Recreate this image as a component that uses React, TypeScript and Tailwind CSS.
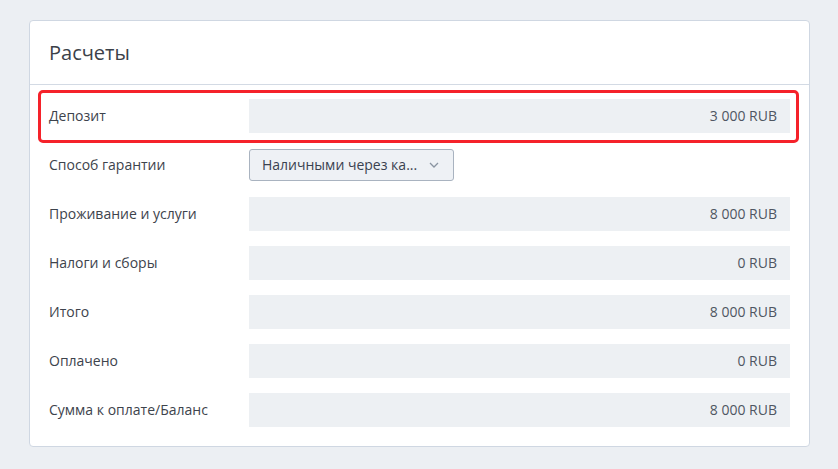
import React from "react";

const rows: { label: string; value?: string; select?: string }[] = [
  { label: "Депозит", value: "3 000 RUB" },
  { label: "Способ гарантии", select: "Наличными через ка..." },
  { label: "Проживание и услуги", value: "8 000 RUB" },
  { label: "Налоги и сборы", value: "0 RUB" },
  { label: "Итого", value: "8 000 RUB" },
  { label: "Оплачено", value: "0 RUB" },
  { label: "Сумма к оплате/Баланс", value: "8 000 RUB" },
];

export default function App() {
  return (
    <div
      className="w-[838px] h-[469px] bg-[#eceff3] pt-[20px] pl-[29px]"
      style={{ fontFamily: '"Open Sans", "Noto Sans", sans-serif' }}
    >
      <div className="w-[781px] h-[427px] bg-white border border-[#cfd7e2] rounded-[4px]">
        <div className="h-[64px] border-b border-[#d3dae4] flex items-center pl-[19px]">
          <span className="text-[20px] text-[#3b4149] leading-[28px] mt-[1px]">Расчеты</span>
        </div>
        <div className="px-[19px] pt-[14px] flex flex-col gap-[15px]">
          {rows.map((r, i) => (
            <div key={i} className="relative flex items-center h-[34px]">
              {i === 0 && (
                <div className="absolute left-[-11px] right-[-9px] top-[-9px] bottom-[-10px] border-[3px] border-[#f5222a] rounded-[5px] pointer-events-none" />
              )}
              <div className="w-[200px] text-[14px] text-[#3d434c] pb-[2px]">{r.label}</div>
              {r.value !== undefined ? (
                <div className="flex-1 h-[34px] bg-[#edf0f3] flex items-center justify-end pr-[13px] pb-[2px] text-[14px] text-[#4f5662]">
                  {r.value}
                </div>
              ) : (
                <div className="w-[205px] h-[32px] bg-[#eef1f5] border border-[#a9b3c0] rounded-[3px] flex items-center pl-[12px] pr-[14px] pb-[1px] justify-between text-[14px] text-[#3a4250]">
                  <span>{r.select}</span>
                  <svg width="10" height="6" viewBox="0 0 10 6" fill="none">
                    <path d="M1 1l4 4 4-4" stroke="#8a94a1" strokeWidth="1.3" />
                  </svg>
                </div>
              )}
            </div>
          ))}
        </div>
      </div>
    </div>
  );
}
